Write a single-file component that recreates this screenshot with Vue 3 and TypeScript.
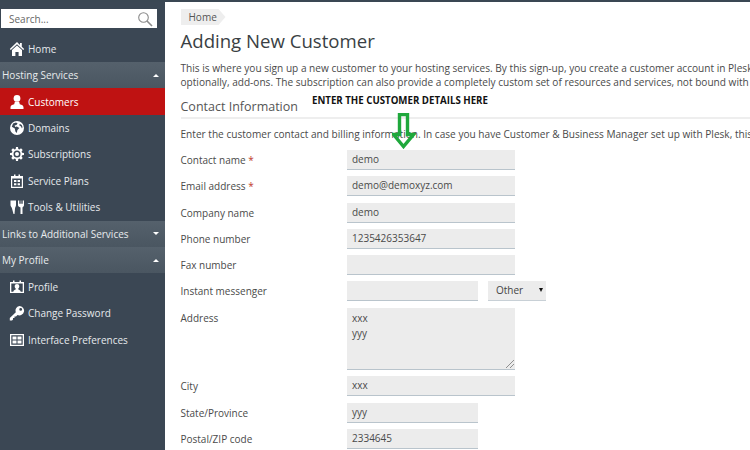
<script setup lang="ts">
interface Item { label: string; kind: 'group' | 'link'; icon?: string; open?: boolean; active?: boolean }
const nav: Item[] = [
  { label: 'Home', kind: 'link', icon: 'home' },
  { label: 'Hosting Services', kind: 'group', open: true },
  { label: 'Customers', kind: 'link', icon: 'user', active: true },
  { label: 'Domains', kind: 'link', icon: 'globe' },
  { label: 'Subscriptions', kind: 'link', icon: 'gear' },
  { label: 'Service Plans', kind: 'link', icon: 'plan' },
  { label: 'Tools & Utilities', kind: 'link', icon: 'tools' },
  { label: 'Links to Additional Services', kind: 'group', open: false },
  { label: 'My Profile', kind: 'group', open: true },
  { label: 'Profile', kind: 'link', icon: 'profile' },
  { label: 'Change Password', kind: 'link', icon: 'key' },
  { label: 'Interface Preferences', kind: 'link', icon: 'grid' },
]
interface Row { label: string; value: string; req?: boolean; size?: string }
const rowsA: Row[] = [
  { label: 'Contact name', value: 'demo', req: true },
  { label: 'Email address', value: 'demo@demoxyz.com', req: true },
  { label: 'Company name', value: 'demo' },
  { label: 'Phone number', value: '1235426353647' },
  { label: 'Fax number', value: '' },
]
const rowsB: Row[] = [
  { label: 'City', value: 'xxx' },
  { label: 'State/Province', value: 'yyy', size: 'short' },
  { label: 'Postal/ZIP code', value: '2334645', size: 'short' },
]
</script>

<template>
  <div class="page">
    <aside class="side">
      <div class="search">
        <span>Search...</span>
        <svg width="16" height="16" viewBox="0 0 16 16" fill="none" stroke="#8b8b8b" stroke-width="1.1">
          <circle cx="6.5" cy="6.5" r="4.8" />
          <path d="M10 10l5 5" stroke-width="1.6" />
        </svg>
      </div>
      <nav class="nav">
        <div v-for="it in nav" :key="it.label" class="item" :class="[it.kind, { active: it.active }]">
          <svg v-if="it.icon" class="ic" width="16" height="16" viewBox="0 0 16 16" fill="#fff">
            <template v-if="it.icon === 'home'">
              <path d="M8 1L0.8 8l1 1L8 3.2 14.2 9l1-1-2.4-2.3V2h-1.8v2L8 1z" />
              <path d="M3 9l5-4.6L13 9v6H9.6v-4H6.4v4H3V9z" />
            </template>
            <template v-else-if="it.icon === 'user'">
              <circle cx="8" cy="4.4" r="3.4" />
              <path d="M5.8 8h4.4l.6 2.2c2.2.5 3.700 1.400 3.700 3V15H1.500v-1.800c0-1.600 1.500-2.500 3.700-3z" />
            </template>
            <template v-else-if="it.icon === 'globe'">
              <path fill-rule="evenodd" d="M8 1a7 7 0 1 1 0 14A7 7 0 0 1 8 1zM4 3.500L2.800 6.800l3 1.700.6 3 1.400 1.500.6-3 2-2-2.600-1.500-1.600.4-.6-1.400 1.800-.5 1.200-1.500L7 2.600zm7 .5l-1 1 2 1.500 1 2 .5-1.500-.8-2z" />
            </template>
            <template v-else-if="it.icon === 'gear'">
              <path fill-rule="evenodd" d="M7 1h2l.3 1.900 1.200.5L12 2.300l1.700 1.700-1.100 1.500.5 1.200L15 7v2l-1.900.3-.5 1.200 1.100 1.500-1.700 1.700-1.500-1.100-1.200.5L9 15H7l-.3-1.900-1.200-.5L4 13.700 2.300 12l1.100-1.500-.5-1.200L1 9V7l1.900-.3.500-1.200L2.300 4 4 2.300l1.500 1.100 1.200-.5zM8 4.500a3.500 3.500 0 1 0 0 7 3.500 3.500 0 0 0 0-7zM8 6a2 2 0 1 1 0 4 2 2 0 0 1 0-4z" />
            </template>
            <template v-else-if="it.icon === 'plan'">
              <path fill-rule="evenodd" d="M2 3h3V1.500h1.500V3h3V1.500H11V3h3v12H2zm1.200 2.500v8.300h9.600V5.500zM5 7h2.400v2H5zm3.600 0H11v2H8.600zM5 10.200h2.400v2H5zm3.600 0H11v2H8.600z" />
            </template>
            <template v-else-if="it.icon === 'tools'">
              <path d="M1.500 1.500h5.500V6c0 1.500-.8 2-1 3.500L5.500 15h-1L3 9.500C2.700 8 1.500 7.500 1.500 6z" />
              <path d="M9 1.500h1.300v3.300h1.400V1.500h.6v3.300h1.400V1.500H15V6c0 1.400-1 2-1.500 2.500V15h-2V8.500C10 8 9 7.400 9 6z" />
            </template>
            <template v-else-if="it.icon === 'profile'">
              <path fill-rule="evenodd" d="M4 1.500h1.500V3h5V1.500H12V3h3v11H1V3h3zM2.300 4.500v8.200h2c.2-1.500 1.500-2 2.400-2.300V9.500C6 9 5.700 8 5.700 7.200 5.700 5.800 6.700 5 8 5s2.300.8 2.300 2.200c0 .8-.3 1.800-1 2.300v.9c.9.300 2.200.8 2.400 2.300h2V4.500z" />
            </template>
            <template v-else-if="it.icon === 'key'">
              <path fill-rule="evenodd" d="M10.300 1a4.700 4.700 0 1 1-1.800 9L7 11.500H5.500V13H4v1.500L3 15.500H.8v-2.500l6-5.800A4.700 4.700 0 0 1 10.300 1zm1.400 2a1.400 1.400 0 1 0 0 2.800 1.400 1.400 0 0 0 0-2.800z" />
            </template>
            <template v-else>
              <path fill-rule="evenodd" d="M1 2h14v12H1zm1.300 1.300v9.400h11.400V3.300zM3.500 4.500h4v3h-4zm5 0h4v3h-4zm-5 4h4v3h-4zm5 0h4v3h-4z" />
            </template>
          </svg>
          <span class="lbl">{{ it.label }}</span>
          <i v-if="it.kind === 'group'" class="tri" :class="{ up: it.open }"></i>
        </div>
      </nav>
    </aside>

    <main class="main">
      <div class="crumb">Home</div>
      <h1>Adding New Customer</h1>
      <p class="lead">This is where you sign up a new customer to your hosting services. By this sign-up, you create a customer account in Plesk<br />optionally, add-ons. The subscription can also provide a completely custom set of resources and services, not bound with</p>
      <h2>Contact Information</h2>
      <p class="intro">Enter the customer contact and billing information. In case you have Customer &amp; Business Manager set up with Plesk, this</p>

      <div class="form">
        <div v-for="r in rowsA" :key="r.label" class="row">
          <label>{{ r.label }}<b v-if="r.req"> *</b></label>
          <div class="field">{{ r.value }}</div>
        </div>
        <div class="row">
          <label>Instant messenger</label>
          <div class="field short"></div>
          <div class="select">Other<i></i></div>
        </div>
        <div class="row tall">
          <label>Address</label>
          <div class="field area">xxx<br />yyy
            <svg class="grip" width="9" height="9" viewBox="0 0 9 9" stroke="#8f8f8f" stroke-width="1"><path d="M1 9l8-8M5 9l4-4" /></svg>
          </div>
        </div>
        <div v-for="r in rowsB" :key="r.label" class="row">
          <label>{{ r.label }}</label>
          <div class="field" :class="r.size">{{ r.value }}</div>
        </div>
      </div>

      <div class="note">ENTER THE CUSTOMER DETAILS HERE</div>
      <svg class="arrow" width="24" height="36" viewBox="0 0 24 36" fill="none" stroke="#1fa83c" stroke-width="3.4">
        <path d="M7.500 1.500h8v20h6L11.500 33.500 1.500 21.500h6z" />
      </svg>
    </main>
  </div>
</template>

<style>
html, body { margin: 0; background: #fff; }
</style>

<style scoped>
.page {
  width: 750px;
  height: 450px;
  display: flex;
  overflow: hidden;
  font-family: "Open Sans", "Liberation Sans", sans-serif;
  border-top: 2px solid #3a4753;
  box-sizing: border-box;
}
.side {
  width: 165px;
  flex: none;
  background: #3b4754;
  padding-top: 7px;
  box-sizing: border-box;
}
.search {
  width: 156px;
  height: 19px;
  margin-left: 1px;
  background: #fff;
  display: flex;
  align-items: center;
  justify-content: space-between;
  padding: 0 4px 0 8px;
  box-sizing: border-box;
  font-size: 10px;
  color: #666;
}
.nav { margin-top: 7.500px; }
.item {
  height: 26.45px;
  display: flex;
  align-items: center;
  font-size: 10px;
  color: #e6e9ec;
}
.item.link { padding-left: 9px; }
.item.link .lbl { margin-left: 3px; }
.item.group {
  padding: 0 6px 0 2px;
  background: linear-gradient(#55616c, #4a5661);
  color: #e8ebed;
}
.item.group .lbl { flex: 1; }
.item.active { background: #bf1212; color: #fff; }
.ic { flex: none; }
.tri {
  width: 0;
  height: 0;
  border-left: 3.500px solid transparent;
  border-right: 3.500px solid transparent;
  border-top: 3.500px solid #fff;
}
.tri.up { border-top: 0; border-bottom: 3.500px solid #fff; }
.main {
  position: relative;
  flex: 1;
  min-width: 0;
  padding: 7px 0 0 15.500px;
  color: #4a4a4a;
  overflow: hidden;
  white-space: nowrap;
}
.crumb {
  width: 45px;
  height: 16px;
  line-height: 16px;
  box-sizing: border-box;
  padding-left: 8px;
  background: #eee;
  font-size: 10px;
  color: #555;
  clip-path: polygon(0 0, 38px 0, 45px 50%, 38px 100%, 0 100%);
}
h1 {
  margin: 3px 0 0;
  font-size: 18.6px;
  line-height: 26px;
  font-weight: 400;
  color: #3a3f44;
}
.lead {
  margin: 7px 0 0;
  font-size: 10.1px;
  line-height: 14px;
}
h2 {
  margin: 9px 0 0;
  padding-bottom: 1px;
  font-size: 12.5px;
  line-height: 18px;
  font-weight: 400;
  color: #555;
  border-bottom: 2px solid #eee;
}
.intro {
  margin: 8px 0 0;
  font-size: 10.1px;
  line-height: 14px;
}
.form { margin-top: 9px; }
.row {
  display: flex;
  align-items: flex-start;
  margin-bottom: 6.300px;
  font-size: 10px;
}
label {
  width: 166.500px;
  flex: none;
  line-height: 20px;
}
label b { font-weight: 400; color: #c0392b; }
.field {
  width: 168px;
  height: 20px;
  box-sizing: border-box;
  background: #ececec;
  border-bottom: 1px solid #b9c4cc;
  padding-left: 5px;
  line-height: 19px;
  color: #4a4a4a;
}
.field.short { width: 131px; }
.field.area {
  position: relative;
  height: 62.300px;
  line-height: 15px;
  padding-top: 3px;
}
.grip { position: absolute; right: 1px; bottom: 1px; }
.select {
  position: relative;
  width: 58px;
  height: 20px;
  margin-left: 10px;
  box-sizing: border-box;
  background: #ececec;
  border-bottom: 1px solid #c8d0d6;
  padding-left: 8px;
  line-height: 19px;
  color: #444;
}
.select i {
  position: absolute;
  right: 3px;
  top: 7px;
  width: 0;
  height: 0;
  border-left: 2.500px solid transparent;
  border-right: 2.500px solid transparent;
  border-top: 4px solid #111;
}
.note {
  position: absolute;
  left: 147px;
  top: 92px;
  font-size: 9.700px;
  line-height: 14px;
  font-weight: 700;
  color: #111;
}
.arrow {
  position: absolute;
  left: 227px;
  top: 111px;
}
</style>
